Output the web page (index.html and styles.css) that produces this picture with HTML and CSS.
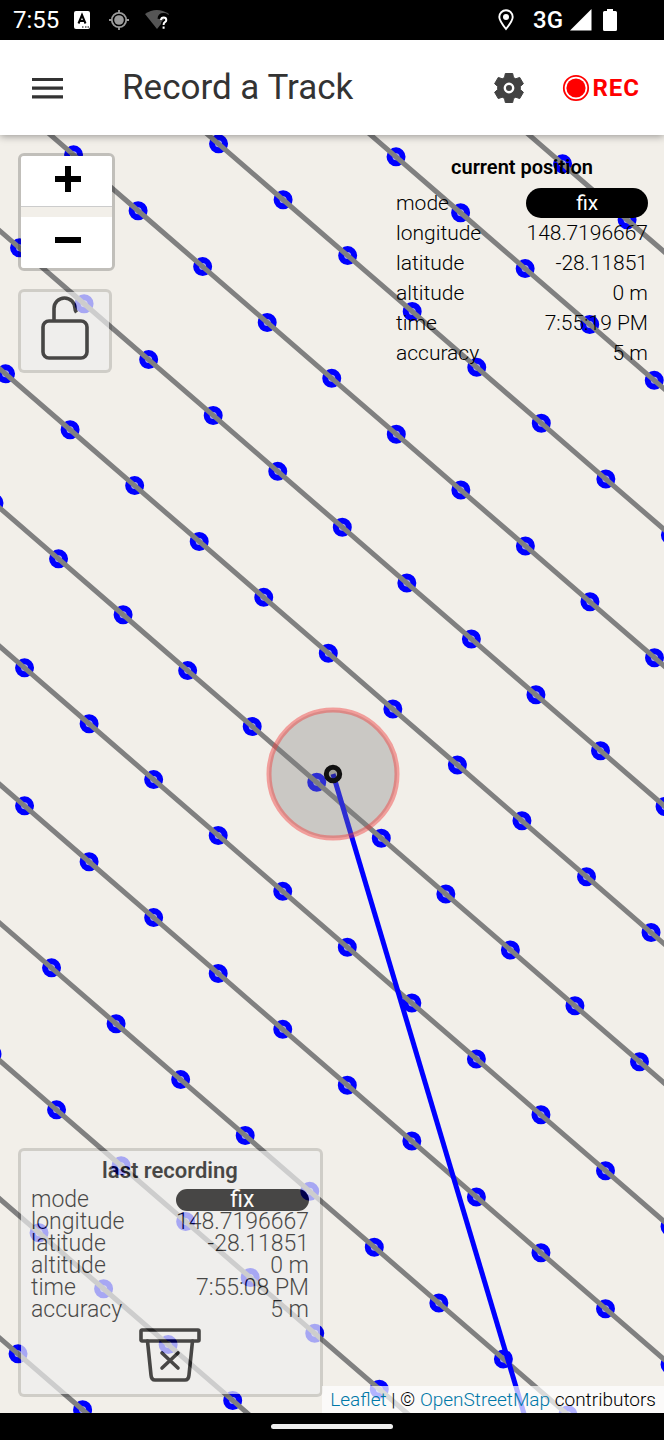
FILE: index.html
```
<!DOCTYPE html>
<html lang="en">
<head>
<meta charset="utf-8">
<meta name="viewport" content="width=device-width, initial-scale=1">
<title>Record a Track</title>
<link rel="stylesheet" href="styles.css">
</head>
<body>
<div class="app">
  <div class="status">
    <span class="clock">7:55</span>
    <svg class="ic-key" width="16" height="18" viewBox="0 0 16 18"><rect width="16" height="18" rx="2" fill="#fff"/><path d="M4.500 12.500 8 4l3.500 8.500M5.800 10h4.400" fill="none" stroke="#000" stroke-width="2"/><path d="M8 16h1.500M11 16h1.500M13.500 16H15" stroke="#000" stroke-width="1.200"/></svg>
    <svg class="ic-gps" width="22" height="22" viewBox="0 0 22 22" fill="none" stroke="#9b9b9b" stroke-width="1.800"><circle cx="11" cy="11" r="7.200"/><circle cx="11" cy="11" r="4.800" fill="#9b9b9b" stroke="none"/><path d="M11 1v3M11 18v3M1 11h3M18 11h3"/></svg>
    <svg class="ic-wifi" width="26" height="22" viewBox="0 0 26 22"><path d="M1 5Q12.500-3 25 5L13 20Z" fill="#555"/><path d="M16 10q.2-3.400 3.500-3.400T23 10q0 1.600-1.800 2.700T19.500 15.500M19.500 17.500v2.500" fill="none" stroke="#000" stroke-width="5"/><path d="M17 11q.2-2.500 2.700-2.500T22.300 11q0 1.300-1.400 2.200T19.600 16M19.600 17.500v2.300" fill="none" stroke="#fff" stroke-width="2"/></svg>
    <span class="spacer"></span>
    <svg class="ic-pin" width="16" height="22" viewBox="0 0 16 22"><path d="M8 20C4 15 1.300 11.500 1.300 8a6.700 6.700 0 0 1 13.400 0C14.700 11.500 12 15 8 20Z" fill="none" stroke="#fff" stroke-width="1.900"/><circle cx="8" cy="8" r="3" fill="#fff"/></svg>
    <span class="network">3G</span>
    <svg class="ic-signal" width="22" height="22" viewBox="0 0 22 22"><path d="M21.500 0v21.500H0Z" fill="#fff"/></svg>
    <svg class="ic-battery" width="14" height="22" viewBox="0 0 14 22"><path d="M4 0h6v2h2.500Q14 2 14 3.500v17Q14 22 12.500 22h-11Q0 22 0 20.500v-17Q0 2 1.500 2H4Z" fill="#fff"/></svg>
  </div>

  <header class="topbar">
    <button class="icon-btn" aria-label="Menu"><svg width="32" height="22" viewBox="0 0 32 22"><path d="M0 2.500h31M0 11.200h31M0 19.800h31" stroke="#333" stroke-width="3.200"/></svg></button>
    <h1 class="title">Record a Track</h1>
    <button class="icon-btn" aria-label="Settings"><svg width="30" height="30" viewBox="0 0 30 30"><path d="M11.300.5h7.400l.8 4 2.300 1.300 3.900-1.400 3.700 6.300-3.100 2.700v3.200l3.100 2.700-3.700 6.300-3.900-1.400-2.300 1.300-.8 4h-7.400l-.8-4-2.300-1.300-3.900 1.400L.6 19.300l3.100-2.700v-3.200L.6 10.700l3.700-6.300 3.900 1.400 2.300-1.300Z" fill="#424242" stroke="#424242" stroke-linejoin="round"/><circle cx="15" cy="15" r="4.200" fill="#424242" stroke="#fff" stroke-width="2.400"/></svg></button>
    <button class="rec"><svg width="28" height="28" viewBox="0 0 28 28"><circle cx="14" cy="14" r="12.200" fill="none" stroke="red" stroke-width="1.800"/><circle cx="14" cy="14" r="9.600" fill="red"/></svg><span>REC</span></button>
  </header>

  <main class="map">
    <svg class="canvas" id="canvas" aria-hidden="true">
      <g id="tracks"></g>
      <path class="heading" d="M333 639 525 1282"/>
      <circle class="accuracy" cx="333" cy="639" r="64"/>
      <circle class="here" cx="333" cy="639" r="6.700"/>
    </svg>

    <div class="controls">
      <div class="zoom">
        <button aria-label="Zoom in"><svg width="28" height="28" viewBox="0 0 28 28"><path d="M1 14h26M14 1v26" stroke="#000" stroke-width="6"/></svg></button>
        <button aria-label="Zoom out"><svg width="28" height="28" viewBox="0 0 28 28"><path d="M1 14h26" stroke="#000" stroke-width="6"/></svg></button>
      </div>
      <button class="lock" aria-label="Unlock map position"><svg width="48" height="66" viewBox="0 0 48 66" fill="none" stroke="#000" stroke-width="3.600"><rect x="2" y="26" width="44" height="37" rx="6"/><path d="M13 26V13.500a10.500 10.500 0 0 1 21 0q0 2 1.500 4"/></svg></button>
    </div>

    <section class="position">
      <h2>current position</h2>
      <dl>
        <dt>mode</dt><dd class="pill">fix</dd>
        <dt>longitude</dt><dd>148.7196667</dd>
        <dt>latitude</dt><dd>-28.11851</dd>
        <dt>altitude</dt><dd>0 m</dd>
        <dt>time</dt><dd>7:55:19 PM</dd>
        <dt>accuracy</dt><dd>5 m</dd>
      </dl>
    </section>

    <section class="recording">
      <h2>last recording</h2>
      <dl>
        <dt>mode</dt><dd class="pill">fix</dd>
        <dt>longitude</dt><dd>148.7196667</dd>
        <dt>latitude</dt><dd>-28.11851</dd>
        <dt>altitude</dt><dd>0 m</dd>
        <dt>time</dt><dd>7:55:08 PM</dd>
        <dt>accuracy</dt><dd>5 m</dd>
      </dl>
      <button class="trash" aria-label="Delete recording"><svg width="62" height="54" viewBox="0 0 62 54" fill="none" stroke="#000" stroke-width="3.600" stroke-linejoin="round" stroke-linecap="round"><rect x="2" y="2" width="58" height="11" rx="1"/><path d="M8.500 13 12 47q.4 5 4 5h30q3.600 0 4-5l3.500-34M23 25l16 15M39 25 23 40"/></svg></button>
    </section>

    <footer class="attribution"><a href="#leaflet">Leaflet</a> | © <a href="#osm">OpenStreetMap</a> contributors</footer>
  </main>
  <div class="navbar"><span></span></div>
</div>
<script src="tracks.js"></script>
</body>
</html>
```
FILE: tracks.js
```
// Each track is given by its first waypoint; waypoints follow at a constant step.
const STEP_X = 64.55;
const STEP_Y = 55.87;
const WAYPOINTS = 15;
const starts = [
  [498, -27], [331.5, -34], [154, -47], [9, -36], [-45, 57],
  [-59, 183], [-6, 368], [-40, 477], [-40, 615],
  [-13, 777], [-8, 919], [-25.5, 1042], [-46.5, 1163]
];
const NS = "http://www.w3.org/2000/svg";
const layer = document.getElementById("tracks");
starts.forEach(([x, y]) => {
  const points = [];
  for (let i = 0; i < WAYPOINTS; i++) {
    const px = x + i * STEP_X;
    const py = y + i * STEP_Y;
    points.push(px + "," + py);
    const dot = document.createElementNS(NS, "circle");
    dot.setAttribute("class", "waypoint");
    dot.setAttribute("cx", px);
    dot.setAttribute("cy", py);
    dot.setAttribute("r", 6.5);
    layer.appendChild(dot);
  }
  points.unshift((x - STEP_X) + "," + (y - STEP_Y));
  const line = document.createElementNS(NS, "polyline");
  line.setAttribute("class", "track");
  line.setAttribute("points", points.join(" "));
  layer.appendChild(line);
});
```
FILE: styles.css
```
* { box-sizing: border-box; }
body { margin: 0; font-family: Roboto, "Liberation Sans", sans-serif; color: #000; }
button { padding: 0; border: 0; background: none; font: inherit; color: inherit; cursor: pointer; }
svg { display: block; flex: none; }
h1, h2, dl, dd { margin: 0; }
.app { display: flex; flex-direction: column; min-height: 100vh; }

.status { display: flex; align-items: center; height: 40px; padding: 0 47px 0 13px; background: #000; color: #fff; font-size: 24px; }
.clock { margin-right: 15px; }
.ic-key { margin-right: 18px; }
.ic-gps { margin-right: 14px; }
.spacer { flex: 1; }
.network { margin: 0 7px 0 19px; font-weight: 500; }
.ic-signal { margin-right: 11px; }

.topbar { position: relative; z-index: 2; display: flex; align-items: center; height: 95px; padding: 0 24px 0 32px; background: #fff; box-shadow: 0 1px 8px rgba(0, 0, 0, .4); }
.title { flex: 1; margin-left: 58px; font-size: 35px; line-height: 40px; font-weight: 400; color: #333; }
.rec { display: flex; align-items: center; gap: 2px; margin-left: 38px; color: red; font-size: 24px; font-weight: 700; letter-spacing: 1px; }

.map { position: relative; flex: 1; overflow: hidden; background: #f2efe9; }
.canvas { position: absolute; inset: 0; width: 100%; height: 100%; }
.waypoint { fill: rgba(51, 51, 255, .4); stroke: #00f; stroke-width: 6; }
.track { fill: none; stroke: #808080; stroke-width: 5; }
.heading { fill: none; stroke: #00f; stroke-width: 5; }
.accuracy { fill: rgba(128, 128, 128, .35); stroke: rgba(240, 60, 60, .45); stroke-width: 5; }
.here { fill: rgba(0, 0, 0, .2); stroke: #111; stroke-width: 5; }

.controls { position: absolute; top: 18px; left: 18px; display: flex; flex-direction: column; align-items: flex-start; gap: 18px; }
.zoom { display: flex; flex-direction: column; gap: 10px; border: 3px solid rgba(0, 0, 0, .2); border-radius: 6px; }
.zoom button { display: grid; justify-content: center; align-content: center; width: 91px; height: 51px; padding: 0 0 5px 2px; background: #fff; }
.zoom button:first-child { border-bottom: 1px solid #ccc; border-radius: 3px 3px 0 0; }
.zoom button:last-child { border-radius: 0 0 3px 3px; }
.lock { display: grid; justify-content: center; align-content: center; width: 94px; height: 84px; padding-bottom: 6px; opacity: .7; background: #eee padding-box; border: 3px solid rgba(0, 0, 0, .2); border-radius: 6px; }

dl { display: grid; grid-template-columns: 1fr auto; }
dd { text-align: right; }
h2 { text-align: center; font-weight: 500; }
.pill { background: #000; color: #fff; text-align: center; border-radius: 15px; font-weight: 400; }

.position { position: absolute; top: 16px; right: 16px; width: 252px; font-size: 21px; line-height: 30px; font-weight: 300; }
.position h2 { font-size: 20px; line-height: 32px; margin-bottom: 5px; font-weight: 600; }

.recording { position: absolute; left: 18px; bottom: 16px; width: 305px; padding: 8px 11px 12px 10px; opacity: .7; background: #eee padding-box; border: 3px solid rgba(0, 0, 0, .2); border-radius: 6px; font-size: 23px; line-height: 22px; font-weight: 300; }
.recording h2 { font-size: 22px; line-height: 24px; margin-bottom: 6px; font-weight: 600; }
.trash { display: block; margin: 7px auto 0; }

.attribution { position: absolute; right: 0; bottom: 0; padding: 0 8px; background: rgba(255, 255, 255, .7); font-size: 19px; line-height: 27px; font-weight: 300; }
.attribution a { color: #0078a8; text-decoration: none; }

.navbar { display: flex; align-items: center; justify-content: center; height: 27px; background: #000; }
.navbar span { width: 122px; height: 5px; border-radius: 3px; background: #eee; }
```
